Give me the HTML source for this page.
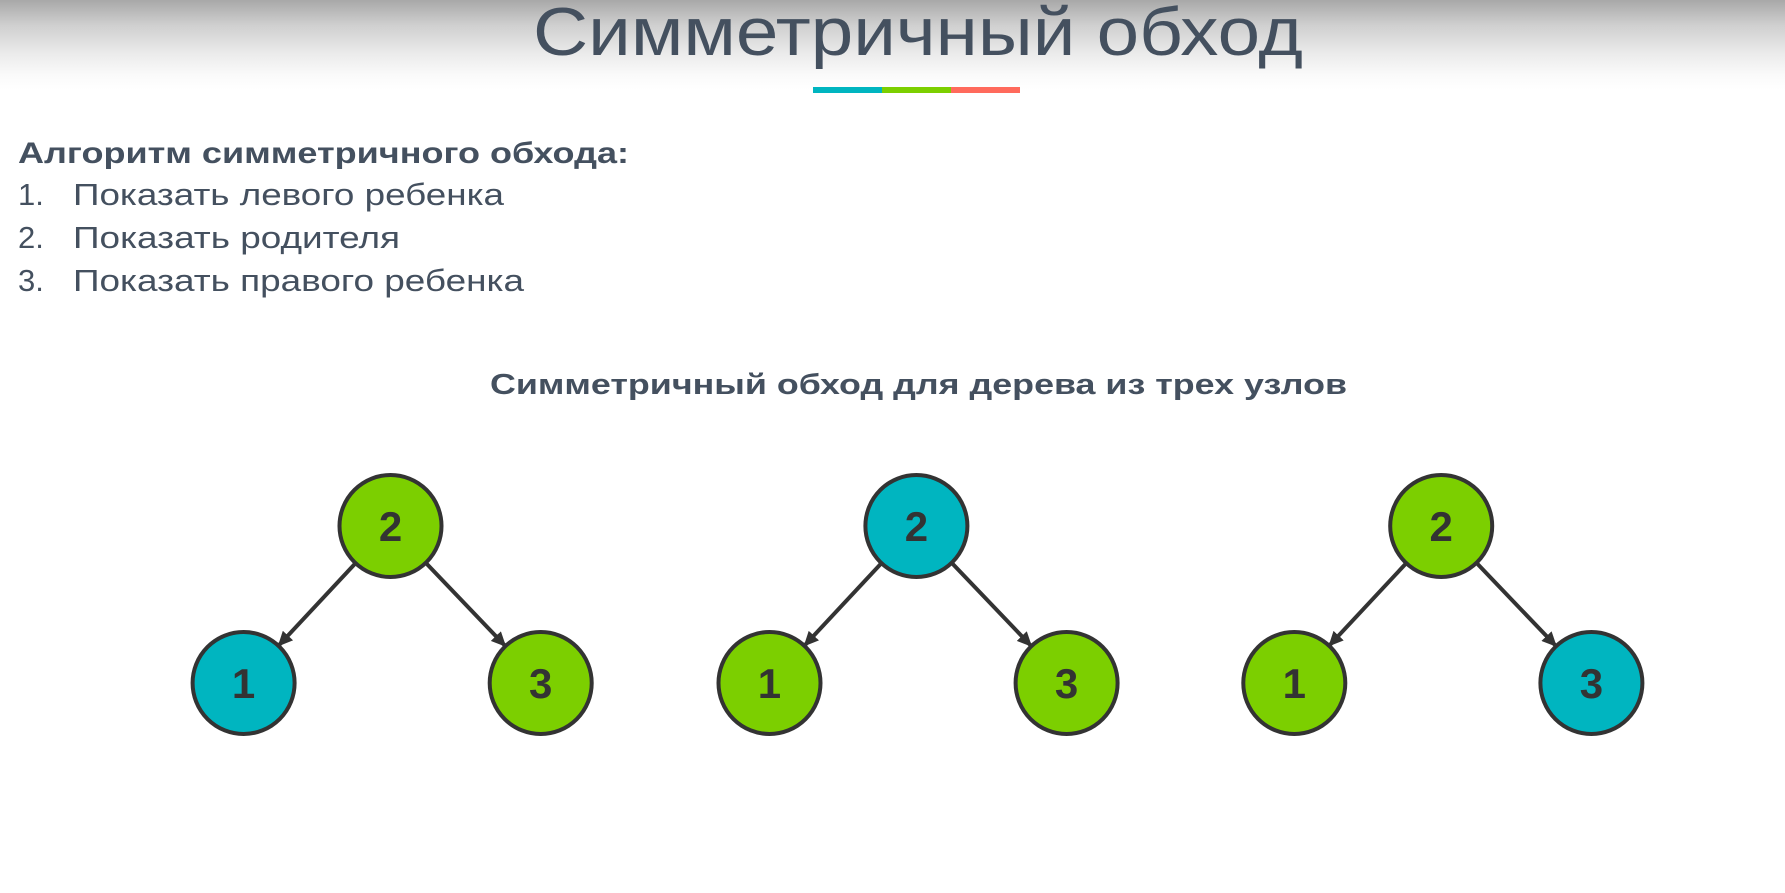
<!DOCTYPE html>
<html><head><meta charset="utf-8"><style>
html,body{margin:0;padding:0;width:1785px;height:893px;overflow:hidden;background:#fff}
body{background:linear-gradient(#a8a8a8 0px,#cfcfcf 25px,#ececec 55px,#fafafa 75px,#fff 90px,#fff 100%)}
svg{display:block}
text{font-family:"Liberation Sans","DejaVu Sans",sans-serif;fill:#44505f}
</style></head><body>
<svg width="1785" height="893" viewBox="0 0 1785 893">
<defs>
<marker id="a" markerUnits="userSpaceOnUse" markerWidth="16" markerHeight="14" refX="14" refY="7" orient="auto">
<path d="M0,0 L15,7 L0,14 Z" fill="#333"/>
</marker>
</defs>
<text x="533" y="55" font-size="68" textLength="770" lengthAdjust="spacingAndGlyphs">Симметричный обход</text>
<rect x="813" y="87" width="69" height="6" fill="#00b5c0"/>
<rect x="882" y="87" width="69" height="6" fill="#7ccf00"/>
<rect x="951" y="87" width="69" height="6" fill="#ff6a5c"/>
<text x="18" y="163" font-size="30" font-weight="bold" textLength="611" lengthAdjust="spacingAndGlyphs">Алгоритм симметричного обхода:</text>
<text x="18" y="205" font-size="31">1.</text><text x="73" y="205" font-size="31" textLength="431" lengthAdjust="spacingAndGlyphs">Показать левого ребенка</text>
<text x="18" y="248" font-size="31">2.</text><text x="73" y="248" font-size="31" textLength="327" lengthAdjust="spacingAndGlyphs">Показать родителя</text>
<text x="18" y="291" font-size="31">3.</text><text x="73" y="291" font-size="31" textLength="451" lengthAdjust="spacingAndGlyphs">Показать правого ребенка</text>
<text x="490" y="394" font-size="29" font-weight="bold" textLength="857" lengthAdjust="spacingAndGlyphs">Симметричный обход для дерева из трех узлов</text>

<g>
<line x1="355.7" y1="563" x2="278.4" y2="645.8" stroke="#333" stroke-width="4" marker-end="url(#a)"/>
<line x1="425.7" y1="562.8" x2="505.5" y2="646.2" stroke="#333" stroke-width="4" marker-end="url(#a)"/>
<circle cx="390.5" cy="526" r="51" fill="#7ccf00" stroke="#333" stroke-width="4"/>
<circle cx="243.6" cy="683" r="51" fill="#00b5c0" stroke="#333" stroke-width="4"/>
<circle cx="540.7" cy="683" r="51" fill="#7ccf00" stroke="#333" stroke-width="4"/>
<text x="390.5" y="541" font-size="42" font-weight="bold" text-anchor="middle" style="fill:#333">2</text>
<text x="243.6" y="698" font-size="42" font-weight="bold" text-anchor="middle" style="fill:#333">1</text>
<text x="540.7" y="698" font-size="42" font-weight="bold" text-anchor="middle" style="fill:#333">3</text>
</g>
<g transform="translate(525.9,0)">
<line x1="355.7" y1="563" x2="278.4" y2="645.8" stroke="#333" stroke-width="4" marker-end="url(#a)"/>
<line x1="425.7" y1="562.8" x2="505.5" y2="646.2" stroke="#333" stroke-width="4" marker-end="url(#a)"/>
<circle cx="390.5" cy="526" r="51" fill="#00b5c0" stroke="#333" stroke-width="4"/>
<circle cx="243.6" cy="683" r="51" fill="#7ccf00" stroke="#333" stroke-width="4"/>
<circle cx="540.7" cy="683" r="51" fill="#7ccf00" stroke="#333" stroke-width="4"/>
<text x="390.5" y="541" font-size="42" font-weight="bold" text-anchor="middle" style="fill:#333">2</text>
<text x="243.6" y="698" font-size="42" font-weight="bold" text-anchor="middle" style="fill:#333">1</text>
<text x="540.7" y="698" font-size="42" font-weight="bold" text-anchor="middle" style="fill:#333">3</text>
</g>
<g transform="translate(1050.7,0)">
<line x1="355.7" y1="563" x2="278.4" y2="645.8" stroke="#333" stroke-width="4" marker-end="url(#a)"/>
<line x1="425.7" y1="562.8" x2="505.5" y2="646.2" stroke="#333" stroke-width="4" marker-end="url(#a)"/>
<circle cx="390.5" cy="526" r="51" fill="#7ccf00" stroke="#333" stroke-width="4"/>
<circle cx="243.6" cy="683" r="51" fill="#7ccf00" stroke="#333" stroke-width="4"/>
<circle cx="540.7" cy="683" r="51" fill="#00b5c0" stroke="#333" stroke-width="4"/>
<text x="390.5" y="541" font-size="42" font-weight="bold" text-anchor="middle" style="fill:#333">2</text>
<text x="243.6" y="698" font-size="42" font-weight="bold" text-anchor="middle" style="fill:#333">1</text>
<text x="540.7" y="698" font-size="42" font-weight="bold" text-anchor="middle" style="fill:#333">3</text>
</g>
</svg>
</body></html>
